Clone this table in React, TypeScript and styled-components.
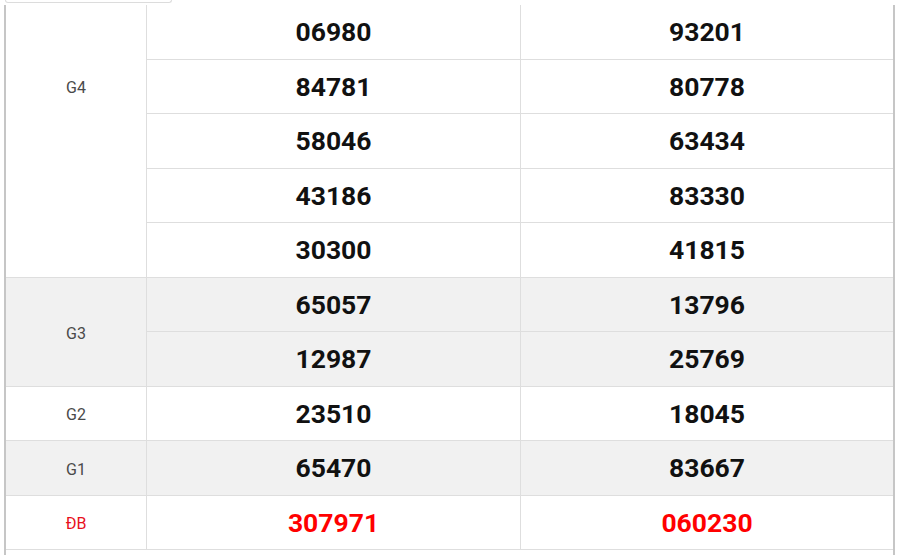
import React from "react";
import styled, { createGlobalStyle } from "styled-components";

const ROW = 54.5;

const GlobalStyle = createGlobalStyle`
  body {
    margin: 0;
    background: #fff;
    font-family: Roboto, "Liberation Sans", Arial, sans-serif;
    overflow: hidden;
  }
`;

const Page = styled.div`
  width: 900px;
  height: 555px;
  overflow: hidden;
`;

const TopStrip = styled.div`
  height: 5px;
  padding-left: 5px;
`;

const TabEdge = styled.div`
  width: 165px;
  height: 2px;
  border: 1px solid #dcdcdc;
  border-top: none;
  border-radius: 0 0 6px 6px;
`;

const Frame = styled.div`
  margin-left: 4px;
  width: 887px;
  height: 550px;
  border-left: 2px solid #c6c6c6;
  border-right: 2px solid #c6c6c6;
`;

const Grid = styled.div`
  display: grid;
  grid-template-columns: 140px 373px 372px;
  grid-auto-rows: ${ROW - 1}px;
  gap: 1px;
  padding-bottom: 1px;
  background: #dedede;
`;

const Label = styled.div<{ $span: number; $shade: boolean; $red?: boolean; $hidden?: number }>`
  grid-row: span ${(p) => p.$span};
  display: flex;
  align-items: center;
  justify-content: center;
  padding-top: 3px;
  padding-bottom: ${(p) => (p.$hidden || 0) * ROW}px;
  background: ${(p) => (p.$shade ? "#f1f1f1" : "#fff")};
  color: ${(p) => (p.$red ? "#e8101c" : "#4a4a4a")};
  font-size: 16px;
`;

const Num = styled.div<{ $shade: boolean; $red?: boolean }>`
  display: flex;
  align-items: center;
  justify-content: center;
  background: ${(p) => (p.$shade ? "#f1f1f1" : "#fff")};
  color: ${(p) => (p.$red ? "#ff0000" : "#111")};
  font-size: 26.5px;
  font-weight: 700;
`;

type Prize = {
  name: string;
  rows: [string, string][];
  shade: boolean;
  red?: boolean;
  hidden?: number;
};

const prizes: Prize[] = [
  {
    name: "G4",
    shade: false,
    hidden: 2,
    rows: [
      ["06980", "93201"],
      ["84781", "80778"],
      ["58046", "63434"],
      ["43186", "83330"],
      ["30300", "41815"],
    ],
  },
  {
    name: "G3",
    shade: true,
    rows: [
      ["65057", "13796"],
      ["12987", "25769"],
    ],
  },
  { name: "G2", shade: false, rows: [["23510", "18045"]] },
  { name: "G1", shade: true, rows: [["65470", "83667"]] },
  { name: "ĐB", shade: false, red: true, rows: [["307971", "060230"]] },
];

export default function App() {
  return (
    <Page>
      <GlobalStyle />
      <TopStrip>
        <TabEdge />
      </TopStrip>
      <Frame>
        <Grid>
          {prizes.map((p) =>
            p.rows.map((r, i) => (
              <React.Fragment key={p.name + i}>
                {i === 0 && (
                  <Label $span={p.rows.length} $shade={p.shade} $red={p.red} $hidden={p.hidden}>
                    {p.name}
                  </Label>
                )}
                <Num $shade={p.shade} $red={p.red}>{r[0]}</Num>
                <Num $shade={p.shade} $red={p.red}>{r[1]}</Num>
              </React.Fragment>
            ))
          )}
        </Grid>
      </Frame>
    </Page>
  );
}
